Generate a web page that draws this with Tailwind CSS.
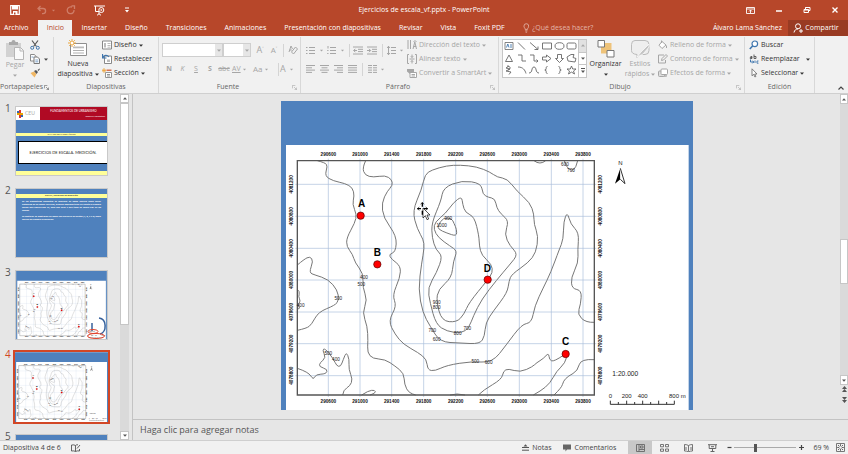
<!DOCTYPE html>
<html lang="es">

<head>
    <meta charset="UTF-8">
    <meta name="viewport" content="width=device-width, initial-scale=1.0">
    <title>Ejercicios de escala_vf.pptx - PowerPoint</title>
    <script src="https://cdn.jsdelivr.net/npm/@tailwindcss/browser@4"></script>
</head>

<body class="h-screen flex flex-col overflow-hidden bg-[#e6e6e6] font-['Open_Sans','Noto_Sans',sans-serif] text-[7px] leading-[10px] text-[#444]">

    <!-- Shared drawings -->
    <svg class="hidden">
        <symbol id="caret" viewBox="0 0 4 3"><path d="M0 .5h4L2 2.8z" fill="currentColor" /></symbol>
        <symbol id="launcher" viewBox="0 0 6 6"><path d="M.5 4V.5H4M2.5 2.5l3 3M5.5 3v2.5H3" fill="none" stroke="currentColor" stroke-width=".8" /></symbol>
        <symbol id="map" viewBox="3 15 1236 927">
            <path d="M3 15h1236v927H3z" fill="#4f81bd" />
            <path d="M18 147h1208v795H18z" fill="#fff" />
            <g id="grid" stroke="#a9bedb" stroke-width="2"></g>
            <g id="contours" fill="none" stroke="#777" stroke-width="3"></g>
            <path d="M52 194h891v703H52z" fill="none" stroke="#555" stroke-width="4" />
            <g id="coords" font-family="Liberation Sans, sans-serif" font-weight="700" font-size="14" fill="#111" text-anchor="middle"></g>
            <g id="heights" font-family="Liberation Sans, sans-serif" font-size="14" fill="#222" text-anchor="middle"></g>
            <g id="points" font-family="Liberation Sans, sans-serif" font-weight="700" font-size="30" fill="#000" text-anchor="middle"></g>
            <g font-family="Liberation Sans, sans-serif" font-size="18" fill="#222" text-anchor="middle">
                <text x="1021" y="208">N</text>
                <text x="1036" y="840" font-size="20">1:20.000</text>
                <text x="991" y="905">0</text>
                <text x="1040" y="905">200</text>
                <text x="1088" y="905">400</text>
                <text x="1192" y="905">800 m</text>
            </g>
            <path d="M1021 217l-16 46 16-13z" fill="#000" />
            <path d="M1021 217l14 46-14-13" fill="#fff" stroke="#333" stroke-width="3" />
            <path d="M991 914v11h192v-11M1015 918v7M1040 914v11M1064 918v7M1088 914v11M1112 918v7M1136 914v11M1160 918v7" fill="none" stroke="#333" stroke-width="3" />
        </symbol>
    </svg>

    <!-- Title bar -->
    <header class="bg-[#b7472a] text-white shrink-0">
        <div class="h-5 grid grid-cols-[1fr_auto_1fr] items-center">
            <div class="flex items-center pl-[10px]">
                <button aria-label="Guardar"><svg class="w-[10px] h-[10px]" viewBox="0 0 10 10"><path d="M.7.7h8.6v8.6H.7z" fill="none" stroke="#fff" stroke-width="1.2" /><path d="M2 1h6v3.5H2zM3 6h4.500v3.500H3z" fill="#fff" /><path d="M4 7.500h1.500v2H4z" fill="#b7472a" /></svg></button>
                <button aria-label="Deshacer" class="ml-[17px] text-[#cf7e69]"><svg class="w-[10px] h-[10px]" viewBox="0 0 10 10"><path d="M3.500 1L1 3.500 3.500 6M1 3.500h5a2.600 2.600 0 0 1 0 5.200H5" fill="none" stroke="currentColor" stroke-width="1.300" /></svg></button>
                <svg class="w-[3px] h-[3px] ml-[5px] text-[#cf7e69]"><use href="#caret" /></svg>
                <button aria-label="Rehacer" class="ml-[11px] text-[#cf7e69]"><svg class="w-[10px] h-[10px]" viewBox="0 0 10 10"><path d="M6 2.200A3.400 3.400 0 1 0 8 5M5.500.800H8.500V4" fill="none" stroke="currentColor" stroke-width="1.300" /></svg></button>
                <button aria-label="Presentación desde el principio" class="ml-[18px]"><svg class="w-[11px] h-[11px]" viewBox="0 0 11 11" fill="none" stroke="#fff"><path d="M0 1h11M1.500 1v5.500H5M5 7v2M3 10.300l2-1.500 2 1.500" /><circle cx="7.300" cy="5" r="2.500" /><path d="M6.700 3.800v2.400L8.500 5z" fill="#fff" stroke="none" /></svg></button>
                <svg class="w-[4px] h-[6px] ml-[20px]" viewBox="0 0 4 6"><path d="M0 .5h4v1H0zM0 3h4L2 5.500z" fill="#fff" /></svg>
            </div>
            <h1>Ejercicios de escala_vf.pptx - PowerPoint</h1>
            <div class="flex items-center justify-end gap-[20px] pr-[9px]">
                <button aria-label="Opciones de presentación de la cinta"><svg class="w-[9px] h-[7px]" viewBox="0 0 9 7"><path d="M.5.5h8v6h-8zM.5 2h8M4.500 6V3M3 4.500L4.500 3 6 4.500" fill="none" stroke="#fff" stroke-width=".9" /></svg></button>
                <button aria-label="Minimizar"><svg class="w-[8px] h-[8px]" viewBox="0 0 8 8"><path d="M1 5h6" stroke="#fff" stroke-width="1.500" /></svg></button>
                <button aria-label="Restaurar"><svg class="w-[8px] h-[8px]" viewBox="0 0 8 8"><path d="M1 3.500h4.500v3H1zM2.500 3.500v-2H7v3H5.500M1 4h4.500M2.500 1.500H7" fill="none" stroke="#fff" /></svg></button>
                <button aria-label="Cerrar"><svg class="w-[8px] h-[8px]" viewBox="0 0 8 8"><path d="M1.500 1.500l5 5M6.500 1.500l-5 5" stroke="#fff" stroke-width="1.400" /></svg></button>
            </div>
        </div>
        <nav class="h-4 flex items-stretch">
            <button class="pl-1 pr-[10px]">Archivo</button>
            <button class="w-[34px] bg-[#f1f1f1] text-[#b7472a]">Inicio</button>
            <button class="px-[9px]">Insertar</button>
            <button class="px-[9px]">Diseño</button>
            <button class="px-[9px]">Transiciones</button>
            <button class="px-[9px]">Animaciones</button>
            <button class="px-[9px]">Presentación con diapositivas</button>
            <button class="px-[9px]">Revisar</button>
            <button class="px-[9px]">Vista</button>
            <button class="px-[9px]">Foxit PDF</button>
            <label class="flex items-center gap-[3px] pl-[9px] flex-1">
                <svg class="w-[7px] h-[10px] text-[#e3b5a9]" viewBox="0 0 7 10"><path d="M2.300 6.500C2.300 5 1 4.800 1 3a2.500 2.500 0 0 1 5 0c0 1.800-1.300 2-1.300 3.500zM2.300 8h2.400M2.700 9.400h1.600" fill="none" stroke="currentColor" stroke-width=".9" /></svg>
                <input type="text" aria-label="¿Qué desea hacer?" placeholder="¿Qué desea hacer?" class="w-full bg-transparent outline-none placeholder:text-[#e3b5a9]">
            </label>
            <button class="pr-[6px]">Álvaro Lama Sánchez</button>
            <button class="w-[60px] bg-[#993b23] flex items-center justify-center gap-[2px] pr-1">
                <svg class="w-[10px] h-[10px]" viewBox="0 0 10 10" fill="none" stroke="#fff"><circle cx="5" cy="3.300" r="2.500" /><path d="M1 9.500C1.500 7 3 6 5 6M6 8h4M8 6v4" /></svg>
                Compartir
            </button>
        </nav>
    </header>

    <!-- Ribbon -->
    <section class="h-[58px] shrink-0 flex bg-[#f1f1f1] border-b border-[#cfcfcf] pt-px">
        <div class="w-[54px] shrink-0 flex flex-col border-r border-[#d8d8d8]">
            <div class="h-[44px] flex">
                <button class="w-[30px] flex flex-col items-center pt-[3px] text-[#a6a6a6]">
                    <svg class="w-[18px] h-[20px] shrink-0" viewBox="0 0 18 20"><path d="M0 3h15v14H0z" fill="#d2d2d2" /><path d="M3 2h2.500a2 2 0 0 1 4 0H12v3H3z" fill="#a9a9a9" /><path d="M8.500 7.500h6l3 3v9h-9z" fill="#fafafa" stroke="#b5b5b5" /><path d="M14 7.500V11h3.500" fill="none" stroke="#b5b5b5" /></svg>
                    <span>Pegar</span>
                    <svg class="w-[4px] h-[3px] mt-1"><use href="#caret" /></svg>
                </button>
                <div class="flex flex-col pt-px">
                    <button aria-label="Cortar" class="h-[14px]"><svg class="w-[10px] h-[10px]" viewBox="0 0 10 10" fill="none"><path d="M2 .5l4.500 6M8 .5L3.500 6.500" stroke="#555" stroke-width="1.200" /><circle cx="2.200" cy="7.800" r="1.500" stroke="#3f76ae" /><circle cx="7.800" cy="7.800" r="1.500" stroke="#3f76ae" /></svg></button>
                    <button aria-label="Copiar" class="h-[14px] flex items-center gap-1"><svg class="w-[10px] h-[10px]" viewBox="0 0 10 10"><path d="M.5.5h4l1.500 2V7H.500z" fill="#fff" stroke="#8b8b8b" /><path d="M4 3h3.500l2 2v4.500H4z" fill="#fff" stroke="#777" /><path d="M5.300 6h3M5.300 7.800h3M1.500 3h2" stroke="#5f8dbd" stroke-width=".8" /></svg><svg class="w-[4px] h-[3px]"><use href="#caret" /></svg></button>
                    <button aria-label="Copiar formato" class="h-[14px]"><svg class="w-[10px] h-[10px]" viewBox="0 0 10 10"><path d="M.5 5L4 3.500 6.500 6 4.500 9.500z" fill="#f0b765" /><path d="M4 3l2-1 2 2-1.500 2zM7.500 2L9.500.500 10 1 8.500 3z" fill="#555" /></svg></button>
                </div>
            </div>
            <div class="h-3 flex items-center justify-between pr-1 text-[#666]"><span>Portapapeles</span><svg class="w-[5px] h-[5px]"><use href="#launcher" /></svg></div>
        </div>

        <div class="w-[105px] shrink-0 flex flex-col border-r border-[#d8d8d8]">
            <div class="h-[44px] flex">
                <button class="w-[48px] flex flex-col items-center pt-[2px] text-[#333]">
                    <svg class="w-[20px] h-[18px] shrink-0 mb-[2px]" viewBox="0 0 20 18"><path d="M2.500 4.500h16v12h-16z" fill="#fff" stroke="#8e8e8e" /><path d="M5 7.500h11v1.800H5z" fill="#bbb" /><path d="M5 11.500h11M5 14h11" stroke="#b0b0b0" /><circle cx="4" cy="4" r="2" fill="#fff" stroke="#eba63f" /><path d="M4 0v1.500M4 6.500V8M0 4h1.500M6.500 4H8M1.200 1.200l1 1M6.800 1.200l-1 1M1.200 6.800l1-1M6.800 6.800l-1-1" stroke="#eba63f" /></svg>
                    <span>Nueva</span>
                    <span class="flex items-center gap-[2px]">diapositiva <svg class="w-[4px] h-[3px]"><use href="#caret" /></svg></span>
                </button>
                <div class="flex flex-col pt-px text-[#333]">
                    <button class="h-[14px] flex items-center gap-[2px]"><svg class="w-[10px] h-[10px]" viewBox="0 0 10 10"><path d="M.5 1h9v8h-9z" fill="#fff" stroke="#888" /><path d="M2 3h2v4.500H2z" fill="#bbb" /><path d="M5.500 3.500h3M5.500 5.500h3M5.500 7.200h3" stroke="#bbb" /></svg>Diseño <svg class="w-[4px] h-[3px]"><use href="#caret" /></svg></button>
                    <button class="h-[14px] flex items-center gap-[2px]"><svg class="w-[10px] h-[10px]" viewBox="0 0 10 10"><path d="M2.500 2h7v7.500h-7z" fill="#fff" stroke="#888" /><path d="M5 5.500h3V8H5z" fill="#bbb" /><path d="M.5 0v4h4M.8 3.800C2 1 5 .500 7 3" fill="none" stroke="#3f76ae" stroke-width="1.200" /></svg>Restablecer</button>
                    <button class="h-[14px] flex items-center gap-[2px]"><svg class="w-[10px] h-[10px]" viewBox="0 0 10 10"><path d="M3.500 4.500h6v5h-6zM5 6.500h3M5 8h3" fill="#fff" stroke="#888" stroke-width=".9" /><path d="M4.500 1.500h5v1.500h-5z" fill="#d5704f" /><path d="M2 0v5M0 2.500h4M.500 1l3 3M3.500 1l-3 3" stroke="#eba63f" stroke-width=".8" /></svg>Sección <svg class="w-[4px] h-[3px]"><use href="#caret" /></svg></button>
                </div>
            </div>
            <div class="h-3 flex items-center justify-center text-[#666]">Diapositivas</div>
        </div>

        <div class="w-[142px] shrink-0 flex flex-col border-r border-[#d8d8d8] text-[#a6a6a6]">
            <div class="h-[44px] flex flex-col pt-[6px] gap-[5px]">
                <div class="flex items-center pl-[3px] h-[14px]">
                    <label class="relative flex items-center"><select aria-label="Fuente" class="appearance-none w-[61px] h-[14px] bg-white border border-[#cfcfcf]"><option></option></select><span class="absolute right-px w-[7px] h-[12px] bg-[#e6e6e6] flex items-center justify-center"><svg class="w-[4px] h-[3px]"><use href="#caret" /></svg></span></label>
                    <label class="relative flex items-center"><select aria-label="Tamaño de fuente" class="appearance-none w-[28px] h-[14px] bg-white border border-[#cfcfcf]"><option></option></select><span class="absolute right-px w-[7px] h-[12px] bg-[#e6e6e6] flex items-center justify-center"><svg class="w-[4px] h-[3px]"><use href="#caret" /></svg></span></label>
                    <button aria-label="Aumentar tamaño" class="w-[14px] text-[9px] ml-[2px]">A<sup class="text-[5px]">˄</sup></button>
                    <button aria-label="Disminuir tamaño" class="w-[14px] text-[8px]">A<sup class="text-[5px]">˅</sup></button>
                    <span class="w-px h-[13px] bg-[#d4d4d4] ml-[2px] mr-[4px]"></span>
                    <button aria-label="Borrar formato"><svg class="w-[10px] h-[10px]" viewBox="0 0 10 10"><path d="M1 7l2-6 1.500 3M1.800 5h2" fill="none" stroke="currentColor" /><path d="M3.500 7l4-5 2 2-4 5z" fill="#f1f1f1" stroke="currentColor" /></svg></button>
                </div>
                <div class="flex items-center h-[14px] pl-[3px]">
                    <button class="w-[14px] font-bold">N</button>
                    <button class="w-[13px] italic">K</button>
                    <button class="w-[14px] underline">S</button>
                    <button class="w-[14px] font-bold">S</button>
                    <button class="w-[14px] line-through">abc</button>
                    <button class="w-[17px] ml-px flex items-center gap-[2px] underline">AV <svg class="w-[3px] h-[3px]"><use href="#caret" /></svg></button>
                    <button class="w-[18px] ml-[4px] flex items-center gap-[2px] text-[8px]">Aa <svg class="w-[3px] h-[3px]"><use href="#caret" /></svg></button>
                    <span class="w-px h-[13px] bg-[#d4d4d4] ml-[7px] mr-px"></span>
                    <button class="flex items-center gap-[4px] text-[9px]">A <svg class="w-[3px] h-[3px]"><use href="#caret" /></svg></button>
                </div>
            </div>
            <div class="h-3 grid grid-cols-[1fr_auto_1fr] items-center pr-[3px] text-[#666]"><span></span><span>Fuente</span><svg class="w-[5px] h-[5px] justify-self-end text-[#aaa]"><use href="#launcher" /></svg></div>
        </div>

        <div class="w-[198px] shrink-0 flex flex-col border-r border-[#d8d8d8] text-[#a6a6a6]">
            <div class="h-[44px] flex justify-between">
                <div class="flex flex-col pt-[6px] gap-[5px] pl-[5px]">
                    <div class="flex items-center h-[14px]">
                        <button aria-label="Viñetas" class="flex items-center gap-[5px] w-[21px]"><svg class="w-[9px] h-[9px]" viewBox="0 0 9 9"><path d="M0 1.500h1.500M0 4.500h1.500M0 7.500h1.500M3 1.500h6M3 4.500h6M3 7.500h6" stroke="currentColor" /></svg><svg class="w-[3px] h-[3px]"><use href="#caret" /></svg></button>
                        <button aria-label="Numeración" class="flex items-center gap-[5px] w-[19px]"><svg class="w-[9px] h-[9px]" viewBox="0 0 9 9"><path d="M1 0v2.500M.2 4.500h1.300M.2 7.500h1.300M3 1.500h6M3 4.500h6M3 7.500h6" stroke="currentColor" /></svg><svg class="w-[3px] h-[3px]"><use href="#caret" /></svg></button>
                        <span class="w-px h-[13px] bg-[#d4d4d4] mx-[3px]"></span>
                        <button aria-label="Disminuir sangría" class="w-[14px]"><svg class="w-[10px] h-[9px]" viewBox="0 0 10 9"><path d="M0 1h10M5 3.300h5M5 5.600h5M0 8h10M4 4.500H.7M2.300 2.800L.7 4.500l1.600 1.700" fill="none" stroke="currentColor" /></svg></button>
                        <button aria-label="Aumentar sangría" class="w-[14px]"><svg class="w-[10px] h-[9px]" viewBox="0 0 10 9"><path d="M0 1h10M5 3.300h5M5 5.600h5M0 8h10M0 4.500h3.500M2 2.800l1.600 1.700L2 6.200" fill="none" stroke="currentColor" /></svg></button>
                        <span class="w-px h-[13px] bg-[#d4d4d4] ml-px mr-[4px]"></span>
                        <button aria-label="Interlineado" class="flex items-center gap-[4px]"><svg class="w-[9px] h-[9px]" viewBox="0 0 9 9"><path d="M1.500 0v9M0 2l1.500-1.700L3 2M0 7l1.500 1.700L3 7M4 1.500h5M4 4.500h5M4 7.500h5" fill="none" stroke="currentColor" /></svg><svg class="w-[3px] h-[3px]"><use href="#caret" /></svg></button>
                    </div>
                    <div class="flex items-center gap-[5px] h-[14px]">
                        <button aria-label="Alinear a la izquierda"><svg class="w-[9px] h-[8px]" viewBox="0 0 9 8"><path d="M0 .5h9M0 2.800h6M0 5.100h9M0 7.400h6" stroke="currentColor" /></svg></button>
                        <button aria-label="Centrar"><svg class="w-[9px] h-[8px]" viewBox="0 0 9 8"><path d="M0 .5h9M1.500 2.800h6M0 5.100h9M1.500 7.400h6" stroke="currentColor" /></svg></button>
                        <button aria-label="Alinear a la derecha"><svg class="w-[9px] h-[8px]" viewBox="0 0 9 8"><path d="M0 .5h9M3 2.800h6M0 5.100h9M3 7.400h6" stroke="currentColor" /></svg></button>
                        <button aria-label="Justificar"><svg class="w-[9px] h-[8px]" viewBox="0 0 9 8"><path d="M0 .5h9M0 2.800h9M0 5.100h9M0 7.400h9" stroke="currentColor" /></svg></button>
                        <span class="w-px h-[13px] bg-[#d4d4d4]"></span>
                        <button aria-label="Columnas" class="flex items-center gap-[4px]"><svg class="w-[9px] h-[8px]" viewBox="0 0 9 8"><path d="M0 .5h4M0 2.800h4M0 5.100h4M0 7.400h4M5 .5h4M5 2.800h4M5 5.100h4M5 7.400h4" stroke="currentColor" /></svg><svg class="w-[3px] h-[3px]"><use href="#caret" /></svg></button>
                    </div>
                </div>
                <div class="w-[91px] flex flex-col pt-px">
                    <button class="h-[14px] flex items-center gap-[2px]"><svg class="w-[10px] h-[10px] shrink-0" viewBox="0 0 10 10"><path d="M1 0v9M3.500 0v9M6 9l1.800-7L9.500 9M6.500 6.500h2.700M6.500 2L8 .500 9.500 2" fill="none" stroke="currentColor" /></svg>Dirección del texto <svg class="w-[4px] h-[3px]"><use href="#caret" /></svg></button>
                    <button class="h-[14px] flex items-center gap-[2px]"><svg class="w-[10px] h-[10px] shrink-0" viewBox="0 0 10 10"><path d="M2 .5H.5v9H2M8 .5h1.500v9H8M2.500 5h5M5 .500v3M5 6.500v3M3.800 2.200L5 3.500l1.200-1.300M3.800 7.800L5 6.500l1.200 1.300" fill="none" stroke="currentColor" /></svg>Alinear texto <svg class="w-[4px] h-[3px]"><use href="#caret" /></svg></button>
                    <button class="h-[14px] flex items-center gap-[2px]"><svg class="w-[10px] h-[10px] shrink-0" viewBox="0 0 10 10"><path d="M0 1h7v3H3v2L0 3.500z" fill="currentColor" /><path d="M3 4.500h6.500v5H3zM4.500 6.500h3.500M4.500 8h3.500" fill="#fff" stroke="currentColor" /></svg>Convertir a SmartArt <svg class="w-[4px] h-[3px]"><use href="#caret" /></svg></button>
                </div>
            </div>
            <div class="h-3 grid grid-cols-[1fr_auto_1fr] items-center pr-[3px] text-[#666]"><span></span><span>Párrafo</span><svg class="w-[5px] h-[5px] justify-self-end text-[#aaa]"><use href="#launcher" /></svg></div>
        </div>

        <div class="w-[246px] shrink-0 flex flex-col border-r border-[#d8d8d8] text-[#a6a6a6]">
            <div class="h-[44px] flex">
                <div class="flex w-[85px] h-[39px] mt-[2px] ml-[3px] bg-white border border-[#c6c6c6]">
                    <svg class="w-[75px] h-[37px]" viewBox="0 0 75 37" fill="none" stroke="#666" stroke-width=".9">
                        <path d="M2 2.500h8v7H2z" stroke="#777" /><path d="M3.500 7.500l1.300-3.500L6 7.500M7 5h2M7 7h2" stroke="#3f76ae" />
                        <path d="M15 2.500l7 7M27 2.500l8 7M35 6.500v3h-3.500M39.500 3h9v6h-9z" />
                        <ellipse cx="56.500" cy="6" rx="4.500" ry="3.300" />
                        <rect x="64" y="3" width="9" height="6" rx="1.500" />
                        <path d="M2.500 21.500h7L6 15zM15 15h4v6h4M27 15h4v6h4M33.500 19.500l1.500 1.500-1.500 1.500M39.500 17h4v-2l4.500 3.500-4.500 3.500v-2h-4zM54.500 14.500h4v4h2l-4 4-4-4h2zM65 21l-1-4 4-2.500h3l-1 3 3 1-1 3.500z" />
                        <path d="M6 26l-3 2 4 1-4 2 5 1-2 2.500M4 26c4 0 4 3 1 4M15 27c5 0 7 3 8 6.500M26 33c4 0 2-6 5-6s1 6 5 6M44.500 26.500c-2 0-1 2-1.500 3l-1.200.5 1.200.5c.5 1-.5 3 1.500 3M55.500 26.500c2 0 1 2 1.500 3l1.200.5-1.200.5c-.5 1 .5 3-1.500 3M68.500 26l1.200 3H73l-2.500 2 1 3-3-1.900-3 1.900 1-3-2.500-2h3.300z" />
                    </svg>
                    <div class="flex flex-col flex-1 border-l border-[#c6c6c6]">
                        <button aria-label="Subir" class="flex-1 bg-[#e1e1e1] flex items-center justify-center"><svg class="w-[4px] h-[3px] rotate-180"><use href="#caret" /></svg></button>
                        <button aria-label="Bajar" class="flex-1 text-[#555] flex items-center justify-center border-y border-[#c6c6c6]"><svg class="w-[4px] h-[3px]"><use href="#caret" /></svg></button>
                        <button aria-label="Más formas" class="flex-1 text-[#555] flex items-center justify-center"><svg class="w-[4px] h-[6px]" viewBox="0 0 4 6"><path d="M0 0h4v1H0zM0 2.500h4L2 5z" fill="currentColor" /></svg></button>
                    </div>
                </div>
                <button class="w-[37px] flex flex-col items-center pt-[3px] text-[#333]">
                    <svg class="w-[18px] h-[18px] shrink-0 mb-px" viewBox="0 0 18 18"><path d="M4 3h10.500v10.500H4z" fill="#eec37a" /><path d="M1 .5h6.500V7H1zM10 10.500h7V17h-7z" fill="#fff" stroke="#777" /></svg>
                    <span>Organizar</span>
                    <svg class="w-[4px] h-[3px] mt-1"><use href="#caret" /></svg>
                </button>
                <button class="w-[32px] flex flex-col items-center pt-[3px]">
                    <svg class="w-[19px] h-[18px] shrink-0 mb-px" viewBox="0 0 19 18"><path d="M4 .5h10q4 0 4 4v6q0 4-4 4H9l-3 3v-3Q.500 14 .500 10.500v-6q0-4 3.500-4z" fill="#eee" stroke="#bbb" /><path d="M18 4L10 12l-4 5 6-3 6-7z" fill="#c4c4c4" stroke="#fff" stroke-width=".7" /></svg>
                    <span>Estilos</span>
                    <span class="flex items-center gap-[2px]">rápidos <svg class="w-[4px] h-[3px]"><use href="#caret" /></svg></span>
                </button>
                <div class="flex flex-col pt-px pl-[2px]">
                    <button class="h-[14px] flex items-center gap-[2px]"><svg class="w-[10px] h-[10px]" viewBox="0 0 10 10"><path d="M4 1.500L8 5 4 8.500 1 5.200zM3.500 3V.500M8.500 5.500v2.500" fill="#fff" stroke="currentColor" /></svg>Relleno de forma <svg class="w-[4px] h-[3px]"><use href="#caret" /></svg></button>
                    <button class="h-[14px] flex items-center gap-[2px]"><svg class="w-[10px] h-[10px]" viewBox="0 0 10 10"><path d="M6 1H.5v8h7V6M3.500 6.500l.5-2L8 .500l1.500 1.500-4 4z" fill="none" stroke="currentColor" /></svg>Contorno de forma <svg class="w-[4px] h-[3px]"><use href="#caret" /></svg></button>
                    <button class="h-[14px] flex items-center gap-[2px]"><svg class="w-[10px] h-[10px]" viewBox="0 0 10 10"><rect x="2" y="3" width="7" height="6" rx="1" fill="#bbb" /><rect x=".5" y="3" width="6" height="5.500" rx="1" fill="#ddd" stroke="currentColor" /><rect x="3" y="1" width="6.500" height="5.500" rx="1" fill="#fff" stroke="currentColor" /></svg>Efectos de forma <svg class="w-[4px] h-[3px]"><use href="#caret" /></svg></button>
                </div>
            </div>
            <div class="h-3 grid grid-cols-[1fr_auto_1fr] items-center pr-[3px] text-[#666]"><span></span><span>Dibujo</span><svg class="w-[5px] h-[5px] justify-self-end text-[#aaa]"><use href="#launcher" /></svg></div>
        </div>

        <div class="w-[70px] shrink-0 flex flex-col border-r border-[#d8d8d8] text-[#333]">
            <div class="h-[44px] flex flex-col pt-px pl-[4px]">
                <button class="h-[14px] flex items-center gap-[2px]"><svg class="w-[10px] h-[10px]" viewBox="0 0 10 10"><circle cx="5.800" cy="3.800" r="2.800" fill="#fff" stroke="#3f76ae" stroke-width="1.200" /><path d="M3.800 5.800L.800 9" stroke="#3f76ae" stroke-width="1.600" /></svg>Buscar</button>
                <button class="h-[14px] flex items-center gap-[2px]"><svg class="w-[10px] h-[10px]" viewBox="0 0 10 10" fill="none"><path d="M3 4.500V2.500H1.500M3 3.500H1.200v1H3M5 .500v4h2v-2H5" stroke="#555" stroke-width=".9" /><path d="M1.500 5.500v2.500h3M3.500 6.700L4.800 8 3.500 9.300" stroke="#3f76ae" /><path d="M9.500 7H8v2.200h1.500M6 6.500v2.500" stroke="#3f76ae" stroke-width=".9" /></svg>Reemplazar <svg class="w-[4px] h-[3px] ml-[4px]"><use href="#caret" /></svg></button>
                <button class="h-[14px] flex items-center gap-[2px]"><svg class="w-[10px] h-[10px]" viewBox="0 0 10 10"><path d="M3 .800v7l1.700-1.500 1.200 2.700 1-.500-1.200-2.500H8z" fill="#fff" stroke="#666" stroke-width=".8" /></svg>Seleccionar <svg class="w-[4px] h-[3px]"><use href="#caret" /></svg></button>
            </div>
            <div class="h-3 flex items-center justify-center text-[#666]">Edición</div>
        </div>
        <div class="flex-1 flex items-end justify-end pr-1 pb-[3px]">
            <button aria-label="Contraer la cinta"><svg class="w-[6px] h-[4px]" viewBox="0 0 6 4"><path d="M.5 3.500L3 1l2.500 2.500" fill="none" stroke="#444" stroke-width="1.200" /></svg></button>
        </div>
    </section>

    <main class="flex-1 min-h-0 flex">
        <!-- Slide thumbnails -->
        <aside class="w-[120px] shrink-0 overflow-hidden">
            <ol class="flex flex-col gap-3 pt-3 text-[10px] text-[#555]">
                <li class="flex h-[70px] shrink-0"><span class="w-[15px] pl-[5px] -mt-[3px]">1</span>
                    <div class="w-[93px] flex flex-col border border-[#c9c9c9] bg-[#4f81bd] font-['Lato',sans-serif] leading-none overflow-hidden">
                        <div class="flex h-[13px] shrink-0">
                            <div class="w-6 bg-white flex items-center gap-[2px] pl-px text-[5px] text-[#aaa]"><svg class="w-[6px] h-[8px]" viewBox="0 0 6 8"><path d="M2 0h2v8H2z" fill="#d33" /><path d="M0 3h6v2H0z" fill="#e9a100" /><path d="M0 1h2v2H0zM4 5h2v2H4z" fill="#36a" /></svg>CEU</div>
                            <div class="flex-1 bg-[#b00a24] text-white text-center text-[3px] pt-[3px]">FUNDAMENTOS DE URBANISMO<p class="text-right text-[2px] pt-[2px] pr-[2px]">Grado en Arquitectura</p></div>
                        </div>
                        <p class="mt-[13px] h-[3px] shrink-0 bg-[#ffff99] text-[#333] text-[2px] text-center">PLAN GENERAL URBANÍSTICO</p>
                        <p class="mt-[5px] ml-[2px] h-[23px] shrink-0 bg-white border border-r-0 border-black text-center text-[4px] leading-[22px] text-[#222]">EJERCICIOS DE ESCALA. MEDICIÓN.</p>
                        <p class="mt-[7px] h-[4px] shrink-0 bg-[#ffff99]"></p>
                    </div>
                </li>
                <li class="flex h-[70px] shrink-0"><span class="w-[15px] pl-[5px] -mt-[3px]">2</span>
                    <div class="w-[93px] border border-[#c9c9c9] bg-[#4f81bd] text-white font-['Open_Sans',sans-serif] font-bold text-[2px] leading-[3px] pt-[5px]">
                        <p class="bg-[#ffff99] text-[#333] text-center h-[4px]">ESCALA, UNIDADES DE MEDICIÓN</p>
                        <p class="px-[6px] pt-[2px] text-justify">En las diapositivas siguientes se explicará de modo sencillo cómo medir distancias en un mapa. Para ello, primero debemos tener en cuenta el número menor que explica qué es, para qué sirve y qué tipos de escala hay en los mapas.</p>
                        <p class="px-[6px] pt-[3px] text-justify">En posterior se mostrarán un mapa con una serie de puntos (A, B, C y D) sobre los que se realizará la medición.</p>
                    </div>
                </li>
                <li class="flex h-[70px] shrink-0"><span class="w-[15px] pl-[5px] -mt-[3px]">3</span>
                    <div class="relative w-[93px] border border-[#c9c9c9]">
                        <svg class="w-full h-full"><use href="#map" /></svg>
                        <svg class="absolute right-0 bottom-0 w-[20px] h-[22px]" viewBox="0 0 20 22" fill="none"><path d="M12 1c8 1 8 14 1 16M5 6v8" stroke="#38629c" stroke-width="1.500" /><ellipse cx="6" cy="14.500" rx="5" ry="2" stroke="#e0442e" /><ellipse cx="9" cy="19" rx="8.500" ry="2.500" stroke="#e0442e" /></svg>
                    </div>
                </li>
                <li class="flex h-[70px] shrink-0"><span class="w-[15px] pl-[5px] -mt-[3px] text-[#d24726]">4</span>
                    <div class="w-[93px] outline-2 outline-[#d24726]"><svg class="w-full h-full"><use href="#map" /></svg></div>
                </li>
                <li class="flex h-[70px] shrink-0"><span class="w-[15px] pl-[5px] -mt-[3px]">5</span>
                    <div class="w-[93px] bg-[#4f81bd] border border-[#c9c9c9]"></div>
                </li>
            </ol>
        </aside>
        <div class="w-[13px] shrink-0 border-r border-[#c3c3c3] flex">
            <div class="w-[9px] flex flex-col bg-[#dadada] text-[#555]">
                <button aria-label="Subir" class="h-[9px] bg-white border border-[#c6c6c6] flex items-center justify-center"><svg class="w-[4px] h-[3px] rotate-180"><use href="#caret" /></svg></button>
                <div class="h-[222px] bg-white border border-[#c6c6c6]"></div>
                <div class="flex-1"></div>
                <button aria-label="Bajar" class="h-[9px] bg-white border border-[#c6c6c6] flex items-center justify-center"><svg class="w-[4px] h-[3px]"><use href="#caret" /></svg></button>
            </div>
        </div>

        <!-- Slide and notes -->
        <div class="flex-1 min-w-0 flex flex-col">
            <div class="flex-1 min-h-0 flex">
                <div class="flex-1 flex justify-center pt-[7px] pb-[9px]">
                    <svg class="h-full aspect-[412/309]" viewBox="0 0 1236 927"><use href="#map" width="1236" height="927" />
                        <!-- Pointer with move arrows -->
                        <g transform="translate(-3 -15)">
                            <path d="M427 320v12M427 344v12M412 338h11M432 338h11" stroke="#000" stroke-width="4" />
                            <path d="M422 325l5-6 5 6M418 333l-6 5 6 5M437 333l6 5-6 5" fill="none" stroke="#000" stroke-width="2" />
                            <path d="M429 336v30l7-7 5 12 5-2-5-12h9z" fill="#fff" stroke="#000" stroke-width="2" />
                        </g>
                    </svg>
                </div>
                <div class="w-2 shrink-0 flex flex-col bg-[#dadada] text-[#555]">
                    <button aria-label="Subir" class="h-[10px] bg-white border border-[#c6c6c6] flex items-center justify-center"><svg class="w-[4px] h-[3px] rotate-180"><use href="#caret" /></svg></button>
                    <div class="flex-1"></div>
                    <div class="h-[45px] bg-white border border-[#c6c6c6]"></div>
                    <div class="flex-[2_2_0%] max-h-[91px]"></div>
                    <button aria-label="Bajar" class="h-[10px] bg-white border border-[#c6c6c6] flex items-center justify-center"><svg class="w-[4px] h-[3px]"><use href="#caret" /></svg></button>
                    <div class="bg-[#e6e6e6] h-[34px] flex flex-col items-center pt-px gap-[5px]">
                        <button aria-label="Diapositiva anterior"><svg class="w-[5px] h-[6px]" viewBox="0 0 5 6"><path d="M0 3L2.500 0 5 3zM0 6l2.500-3L5 6z" fill="currentColor" /></svg></button>
                        <button aria-label="Diapositiva siguiente"><svg class="w-[5px] h-[6px]" viewBox="0 0 5 6"><path d="M0 0h5L2.500 3zM0 3h5L2.500 6z" fill="currentColor" /></svg></button>
                    </div>
                </div>
            </div>
            <textarea aria-label="Notas" rows="1" placeholder="Haga clic para agregar notas" class="h-[21px] shrink-0 resize-none border-t border-[#c3c3c3] px-[7px] pt-[4px] text-[9px] leading-[11px] outline-none placeholder:text-[#555]"></textarea>
        </div>
    </main>

    <!-- Status bar -->
    <footer class="h-[14px] shrink-0 flex items-center bg-[#f1f1f1] border-t border-[#cfcfcf] px-[3px]">
        <span>Diapositiva 4 de 6</span>
        <button aria-label="Ortografía" class="ml-[10px]"><svg class="w-[10px] h-[8px]" viewBox="0 0 10 8"><path d="M4.500 1.500v6M4.500 1.500Q3 .500.500 1v6q2.500-.500 4 .500Q6 6.500 8.500 7V5M4.500 1.500Q5.500.500 7 .800M6 4.500l3-3.500" fill="none" stroke="#555" stroke-width=".9" /></svg></button>
        <div class="flex-1"></div>
        <button class="flex items-center gap-[3px] mr-3"><svg class="w-[7px] h-[7px]" viewBox="0 0 7 7"><path d="M0 3.500h7M0 6.200h7" stroke="#555" /><path d="M1.500 2.500L3.500.300l2 2.200z" fill="#555" /></svg>Notas</button>
        <button class="flex items-center gap-[3px] mr-3"><svg class="w-[8px] h-[8px]" viewBox="0 0 8 8"><path d="M0 .500h8v5H4L2.500 7.500v-2H0z" fill="#666" /></svg>Comentarios</button>
        <button aria-label="Normal" class="w-6 h-full bg-[#c8c8c8] flex items-center justify-center"><svg class="w-[9px] h-[8px]" viewBox="0 0 9 8"><path d="M.5.500h8v7h-8zM3 .500v7M3 5.500h5.500M4.500 2h2.500v2H4.500z" fill="none" stroke="#666" stroke-width=".9" /></svg></button>
        <button aria-label="Clasificador" class="w-6 flex items-center justify-center"><svg class="w-[9px] h-[8px]" viewBox="0 0 9 8"><path d="M.5.500h3v2.300h-3zM5.500.500h3v2.300h-3zM.500 5h3v2.300h-3zM5.500 5h3v2.300h-3z" fill="none" stroke="#666" stroke-width=".9" /></svg></button>
        <button aria-label="Lectura" class="w-6 flex items-center justify-center"><svg class="w-[9px] h-[8px]" viewBox="0 0 9 8"><path d="M4.500 1.500v6M.5.500q2.500 0 4 1 1.500-1 4-1V7q-2.500 0-4 .800Q3 7 .500 7zM2 3v3M7 3v3" fill="none" stroke="#666" stroke-width=".9" /></svg></button>
        <button aria-label="Presentación" class="w-6 flex items-center justify-center"><svg class="w-[9px] h-[8px]" viewBox="0 0 9 8"><path d="M0 .700h9M1.200 1v3.500h6.600V1M4.500 4.500V7M2.500 7.500h4M3 2.700h3" fill="none" stroke="#666" /></svg></button>
        <button aria-label="Alejar" class="w-[10px]"><svg class="w-[5px] h-[5px] mx-auto" viewBox="0 0 5 5"><path d="M.5 2.500h4" stroke="#444" stroke-width="1.200" /></svg></button>
        <input type="range" aria-label="Zoom" min="0" max="100" value="33" class="w-[62px] h-[8px] appearance-none bg-[linear-gradient(#aaa,#aaa)] bg-[length:100%_1px] bg-center bg-no-repeat [&::-webkit-slider-thumb]:appearance-none [&::-webkit-slider-thumb]:w-[3px] [&::-webkit-slider-thumb]:h-[8px] [&::-webkit-slider-thumb]:bg-[#555]">
        <button aria-label="Acercar" class="w-[10px]"><svg class="w-[5px] h-[5px] mx-auto" viewBox="0 0 5 5"><path d="M0 2.500h5M2.500 0v5" stroke="#444" stroke-width="1.200" /></svg></button>
        <span class="ml-[7px]">69 %</span>
        <button aria-label="Ajustar a la ventana" class="ml-[7px]"><svg class="w-[9px] h-[9px]" viewBox="0 0 9 9"><path d="M.5.500h8v8h-8z" fill="none" stroke="#777" /><path d="M4.500 1.200v2M4.500 5.800v2M1.200 4.500h2M5.800 4.500h2M2 2l1.500 1.500M7 2L5.500 3.500M2 7l1.500-1.500M7 7L5.500 5.500" stroke="#666" /></svg></button>
    </footer>

    <script>
        const eastings = [290600, 291000, 291400, 291800, 292200, 292600, 293000, 293400, 293800];
        const northings = [4081200, 4080800, 4080400, 4080000, 4079600, 4079200, 4078800];
        const xs = [145, 240, 335, 431, 527, 622, 718, 814, 909];
        const ys = [265, 361, 457, 552, 648, 743, 839];

        // Contour lines as x,y lists; a leading "z" closes the ring
        const contours = [
            '112,194 135,200 143,210 134,240 160,255 195,262 218,275 223,300 217,325 230,355 225,380 200,425 200,452 218,475 225,500 250,532 248,575 262,612 247,650 262,690 264,735 262,770 278,788 315,790 345,810 372,832 373,865 387,892 407,897',
            '257,194 247,215 255,238 280,244 315,238 335,250 338,268 322,285 305,320 310,365 350,420 347,468 326,475 335,490 362,510 360,545 337,598 350,630 325,675 345,715 370,745 415,770 440,790 443,822 465,825 500,808 575,796 637,800 680,745 725,685 755,680 764,630 790,575 812,530 838,460 850,430 851,375 862,348 872,385 897,410 893,462 895,500 873,545 876,578 905,583 902,625 892,655 918,680 943,679',
            'z630,228 652,244 682,248 710,285 750,320 762,355 762,385 775,420 768,470 745,500 695,535 687,555 682,590 640,645 617,680 614,720 600,744 540,741 480,738 450,690 428,650 415,580 425,500 433,455 430,430 412,400 397,345 425,280 435,235 455,222 500,209 540,207 590,212',
            'z625,304 608,295 604,262 545,253 490,275 483,315 455,380 456,425 468,462 488,480 470,530 443,575 450,620 468,685 500,706 545,712 567,695 580,660 605,610 650,552 690,505 714,475 690,450 673,415 687,375 662,353 650,335 645,308',
            'z545,301 520,320 497,352 465,378 461,400 475,425 510,450 532,465 520,495 515,545 475,580 469,615 485,675 530,679 552,655 567,620 622,553 638,530 635,505 605,478 598,450 597,420 583,362 556,350 548,325',
            'z475,400 500,411 530,421 530,400 522,382 515,367 490,365 474,388',
            '52,507 72,490 90,481 100,495 87,530 105,537 145,550 172,582 177,612 165,628 115,648 95,685 80,697 52,703',
            '52,580 60,587 55,602 62,615 53,628 62,637 52,640',
            '52,817 85,828 100,852 107,835 138,834 143,820 117,812 120,800 138,785 127,762 135,757 160,788 170,810 182,812 190,790 199,768 208,790 206,820 218,850 210,870 190,882 188,897',
            '245,897 265,884 285,882 287,892 270,897',
            '510,897 530,891 555,897',
            '595,897 610,882 665,850 670,825 685,818 720,829 758,812 770,800 790,788 806,770 808,792 822,797 850,778',
            '860,784 855,802 830,825 810,862 782,885 760,897',
            '822,897 845,875 850,855 865,840 893,825 902,788 943,791',
            '762,194 780,208 797,194',
            '853,194 858,212 875,225 888,215 893,194'
        ];

        function smooth(list) {
            const closed = list[0] === 'z';
            const p = list.replace('z', '').split(' ').map(s => s.split(',').map(Number));
            const mid = (a, b) => `${(a[0] + b[0]) / 2},${(a[1] + b[1]) / 2}`;
            const n = p.length;
            if (closed) {
                return `M${mid(p[n - 1], p[0])}` + p.map((pt, i) => `Q${pt} ${mid(pt, p[(i + 1) % n])}`).join('') + 'Z';
            }
            let d = `M${p[0]}`;
            for (let i = 1; i < n - 1; i++) {
                d += `Q${p[i]} ${i === n - 2 ? p[n - 1] : mid(p[i], p[i + 1])}`;
            }
            return d;
        }

        const heights = [
            [900, 505, 372], [1000, 485, 392], [400, 252, 549], [500, 244, 571], [500, 175, 611], [400, 62, 633],
            [900, 470, 623], [800, 470, 640], [700, 457, 709], [600, 470, 734], [700, 562, 703], [800, 533, 717],
            [500, 586, 800], [600, 626, 805], [600, 855, 210], [700, 873, 227], [500, 145, 778], [400, 168, 795]
        ];
        const points = [['A', 242, 359, 245, 333], ['B', 292, 505, 292, 480], ['D', 623, 551, 622, 529], ['C', 857, 774, 857, 746]];

        document.getElementById('grid').innerHTML =
            xs.map(x => `<path d="M${x} 188V903" />`).join('') + ys.map(y => `<path d="M46 ${y}H949" />`).join('');
        document.getElementById('contours').innerHTML = contours.map(c => `<path d="${smooth(c)}" />`).join('');
        document.getElementById('coords').innerHTML =
            eastings.map((e, i) => `<text x="${xs[i]}" y="180">${e}</text><text x="${xs[i]}" y="920">${e}</text>`).join('') +
            northings.map((n, i) => [38, 966].map(x => `<text transform="translate(${x} ${ys[i]}) rotate(-90)">${n}</text>`).join('')).join('');
        document.getElementById('heights').innerHTML = heights.map(h => `<text x="${h[1]}" y="${h[2]}">${h[0]}</text>`).join('');
        document.getElementById('points').innerHTML = points.map(p =>
            `<circle cx="${p[1]}" cy="${p[2]}" r="11" fill="#f00" stroke="#500" stroke-width="2" /><text x="${p[3]}" y="${p[4]}">${p[0]}</text>`).join('');
    </script>
</body>

</html>
